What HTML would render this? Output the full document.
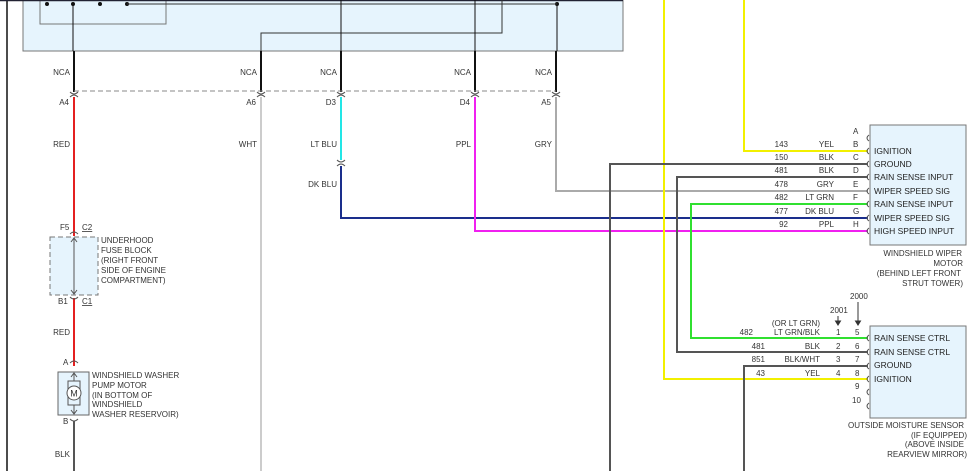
<!DOCTYPE html>
<html><head><meta charset="utf-8"><style>
html,body{margin:0;padding:0;background:#fff;}
svg{display:block;}
text{font-family:"Liberation Sans",sans-serif;font-size:8px;fill:#333;}
.r{text-anchor:end;}
.b{font-size:8.5px;fill:#222;}
</style></head><body>
<svg width="978" height="471" viewBox="0 0 978 471">
<!-- top module -->
<line x1="7" y1="0" x2="7" y2="471" stroke="#111" stroke-width="1.5"/>
<rect x="23" y="-2" width="600" height="53" fill="#e6f4fd" stroke="#777" stroke-width="1"/>
<rect x="40" y="-2" width="126" height="26" fill="none" stroke="#777" stroke-width="1"/>
<line x1="0" y1="0.5" x2="623" y2="0.5" stroke="#223" stroke-width="1.5"/>
<g fill="#111"><circle cx="47" cy="4" r="2"/><circle cx="73" cy="4" r="2"/><circle cx="100" cy="4" r="2"/><circle cx="127" cy="4" r="2"/><circle cx="557" cy="4" r="2"/></g>
<g stroke="#333" stroke-width="1" fill="none">
<line x1="127" y1="4" x2="557" y2="4"/>
<polyline points="261,54 261,33 502,33 502,0"/>
</g>
<g stroke="#111" stroke-width="1" fill="none">
<line x1="73" y1="4" x2="73" y2="51"/>
<line x1="341" y1="0" x2="341" y2="51"/>
<line x1="475" y1="0" x2="475" y2="51"/>
<line x1="557" y1="4" x2="557" y2="51"/>
</g>
<g stroke="#111" stroke-width="2">
<line x1="74" y1="51" x2="74" y2="92"/><line x1="261" y1="51" x2="261" y2="92"/><line x1="341" y1="51" x2="341" y2="92"/><line x1="475" y1="51" x2="475" y2="92"/><line x1="556" y1="51" x2="556" y2="92"/>
</g>
<line x1="74" y1="91" x2="556" y2="91" stroke="#888" stroke-dasharray="5,3"/>
<g stroke="#555" fill="none" stroke-width="1">
<path d="M70,92 Q74,96 78,92"/><path d="M70,97 Q74,93 78,97"/>
<path d="M257,92 Q261,96 265,92"/><path d="M257,97 Q261,93 265,97"/>
<path d="M337,92 Q341,96 345,92"/><path d="M337,97 Q341,93 345,97"/>
<path d="M471,92 Q475,96 479,92"/><path d="M471,97 Q475,93 479,97"/>
<path d="M552,92 Q556,96 560,92"/><path d="M552,97 Q556,93 560,97"/>
<path d="M337,160 Q341,164 345,160"/><path d="M337,166 Q341,162 345,166"/>
</g>
<g class="r">
<text x="70" y="75" class="r">NCA</text><text x="257" y="75" class="r">NCA</text><text x="337" y="75" class="r">NCA</text><text x="471" y="75" class="r">NCA</text><text x="552" y="75" class="r">NCA</text>
<text x="69" y="105" class="r">A4</text><text x="256" y="105" class="r">A6</text><text x="336" y="105" class="r">D3</text><text x="470" y="105" class="r">D4</text><text x="551" y="105" class="r">A5</text>
<text x="70" y="147" class="r">RED</text><text x="257" y="147" class="r">WHT</text><text x="337" y="147" class="r">LT BLU</text><text x="471" y="147" class="r">PPL</text><text x="552" y="147" class="r">GRY</text>
<text x="337" y="187" class="r">DK BLU</text>
</g>
<!-- wires -->
<g fill="none" stroke-width="2">
<line x1="74" y1="97" x2="74" y2="236" stroke="#e42020"/>
<line x1="74" y1="298" x2="74" y2="366" stroke="#e42020"/>
<line x1="74" y1="421" x2="74" y2="471" stroke="#555"/>
<line x1="261" y1="97" x2="261" y2="471" stroke="#ccc"/>
<line x1="341" y1="97" x2="341" y2="160" stroke="#22e6e6"/>
<polyline points="341,166 341,218 868,218" stroke="#1a2e8c"/>
<polyline points="475,97 475,231 868,231" stroke="#f020f0"/>
<polyline points="556,97 556,191 868,191" stroke="#aaa"/>
<polyline points="744,0 744,151 868,151" stroke="#f2f000"/>
<polyline points="664,0 664,379 868,379" stroke="#f2f000"/>
<polyline points="610,471 610,164 868,164" stroke="#555"/>
<polyline points="868,177 677,177 677,352 868,352" stroke="#555"/>
<polyline points="868,204 691,204 691,338 868,338" stroke="#30e030"/>
<polyline points="744,471 744,366 868,366" stroke="#555"/>
</g>
<!-- fuse block -->
<rect x="50" y="237" width="48" height="58" fill="#e6f4fd" stroke="#777" stroke-dasharray="5,3"/>
<line x1="74" y1="238" x2="74" y2="294" stroke="#555"/>
<path d="M71,242 L74,238 L77,242 M71,290 L74,294 L77,290" stroke="#555" fill="none"/>
<g stroke="#555" fill="none"><path d="M70,234 Q74,230 78,234"/><path d="M70,297 Q74,301 78,297"/><path d="M70,363 Q74,359 78,363"/><path d="M70,419 Q74,423 78,419"/></g>
<text x="60" y="230">F5</text><text x="82" y="230" text-decoration="underline">C2</text>
<text x="58" y="304">B1</text><text x="82" y="304" text-decoration="underline">C1</text>
<text x="101" y="243">UNDERHOOD</text><text x="101" y="253">FUSE BLOCK</text><text x="101" y="263">(RIGHT FRONT</text><text x="101" y="273">SIDE OF ENGINE</text><text x="101" y="283">COMPARTMENT)</text>
<text x="70" y="335" class="r">RED</text>
<text x="63" y="365">A</text>
<rect x="58" y="372" width="31" height="43" fill="#e6f4fd" stroke="#666"/>
<line x1="74" y1="373" x2="74" y2="414" stroke="#555"/>
<path d="M71,377 L74,373 L77,377 M71,410 L74,414 L77,410" stroke="#555" fill="none"/>
<rect x="68" y="381" width="12" height="24" fill="#e6f4fd" stroke="#555"/>
<circle cx="74" cy="393" r="7" fill="#fff" stroke="#555"/>
<text x="74" y="396.5" style="font-size:9px;text-anchor:middle">M</text>
<text x="63" y="424">B</text>
<text x="92" y="378">WINDSHIELD WASHER</text><text x="92" y="388">PUMP MOTOR</text><text x="92" y="398">(IN BOTTOM OF</text><text x="92" y="407">WINDSHIELD</text><text x="92" y="417">WASHER RESERVOIR)</text>
<text x="70" y="457" class="r">BLK</text>
<!-- wiper motor -->
<rect x="870" y="125" width="96" height="120" fill="#e6f4fd" stroke="#777"/>
<g stroke="#555" fill="none">
<path d="M869,135 Q865,138 869,141"/><path d="M869,148 Q865,151 869,154"/><path d="M869,161 Q865,164 869,167"/><path d="M869,174 Q865,177 869,180"/><path d="M869,188 Q865,191 869,194"/><path d="M869,201 Q865,204 869,207"/><path d="M869,215 Q865,218 869,221"/><path d="M869,228 Q865,231 869,234"/>
</g>
<g>
<text x="853" y="134">A</text><text x="853" y="147">B</text><text x="853" y="160">C</text><text x="853" y="173">D</text><text x="853" y="187">E</text><text x="853" y="200">F</text><text x="853" y="214">G</text><text x="853" y="227">H</text>
<text x="788" y="147" class="r">143</text><text x="788" y="160" class="r">150</text><text x="788" y="173" class="r">481</text><text x="788" y="187" class="r">478</text><text x="788" y="200" class="r">482</text><text x="788" y="214" class="r">477</text><text x="788" y="227" class="r">92</text>
<text x="834" y="147" class="r">YEL</text><text x="834" y="160" class="r">BLK</text><text x="834" y="173" class="r">BLK</text><text x="834" y="187" class="r">GRY</text><text x="834" y="200" class="r">LT GRN</text><text x="834" y="214" class="r">DK BLU</text><text x="834" y="227" class="r">PPL</text>
<text x="874" y="154" class="b">IGNITION</text><text x="874" y="167" class="b">GROUND</text><text x="874" y="180" class="b">RAIN SENSE INPUT</text><text x="874" y="194" class="b">WIPER SPEED SIG</text><text x="874" y="207" class="b">RAIN SENSE INPUT</text><text x="874" y="221" class="b">WIPER SPEED SIG</text><text x="874" y="234" class="b">HIGH SPEED INPUT</text>
<text x="962" y="256" class="r">WINDSHIELD WIPER</text><text x="963" y="266" class="r">MOTOR</text><text x="961" y="276" class="r">(BEHIND LEFT FRONT</text><text x="963" y="286" class="r">STRUT TOWER)</text>
</g>
<!-- sensor -->
<text x="850" y="299">2000</text><text x="830" y="313">2001</text>
<g stroke="#333" fill="#333"><line x1="858" y1="302" x2="858" y2="322"/><path d="M855.5,321 L860.5,321 L858,325 Z"/><line x1="838" y1="316" x2="838" y2="322"/><path d="M835.5,321 L840.5,321 L838,325 Z"/></g>
<rect x="870" y="326" width="96" height="92" fill="#e6f4fd" stroke="#777"/>
<g stroke="#555" fill="none">
<path d="M869,335 Q865,338 869,341"/><path d="M869,349 Q865,352 869,355"/><path d="M869,363 Q865,366 869,369"/><path d="M869,376 Q865,379 869,382"/><path d="M869,389 Q865,392 869,395"/><path d="M869,403 Q865,406 869,409"/>
</g>
<text x="820" y="326" class="r">(OR LT GRN)</text>
<text x="820" y="335" class="r">LT GRN/BLK</text><text x="820" y="349" class="r">BLK</text><text x="820" y="362" class="r">BLK/WHT</text><text x="820" y="376" class="r">YEL</text>
<text x="753" y="335" class="r">482</text><text x="765" y="349" class="r">481</text><text x="765" y="362" class="r">851</text><text x="765" y="376" class="r">43</text>
<text x="836" y="335">1</text><text x="836" y="349">2</text><text x="836" y="362">3</text><text x="836" y="376">4</text>
<text x="855" y="335">5</text><text x="855" y="349">6</text><text x="855" y="362">7</text><text x="855" y="376">8</text><text x="855" y="389">9</text><text x="852" y="403">10</text>
<text x="874" y="341" class="b">RAIN SENSE CTRL</text><text x="874" y="355" class="b">RAIN SENSE CTRL</text><text x="874" y="368" class="b">GROUND</text><text x="874" y="382" class="b">IGNITION</text>
<text x="964" y="428" class="r">OUTSIDE MOISTURE SENSOR</text><text x="967" y="438" class="r">(IF EQUIPPED)</text><text x="964" y="447" class="r">(ABOVE INSIDE</text><text x="967" y="457" class="r">REARVIEW MIRROR)</text>
</svg>
</body></html>
